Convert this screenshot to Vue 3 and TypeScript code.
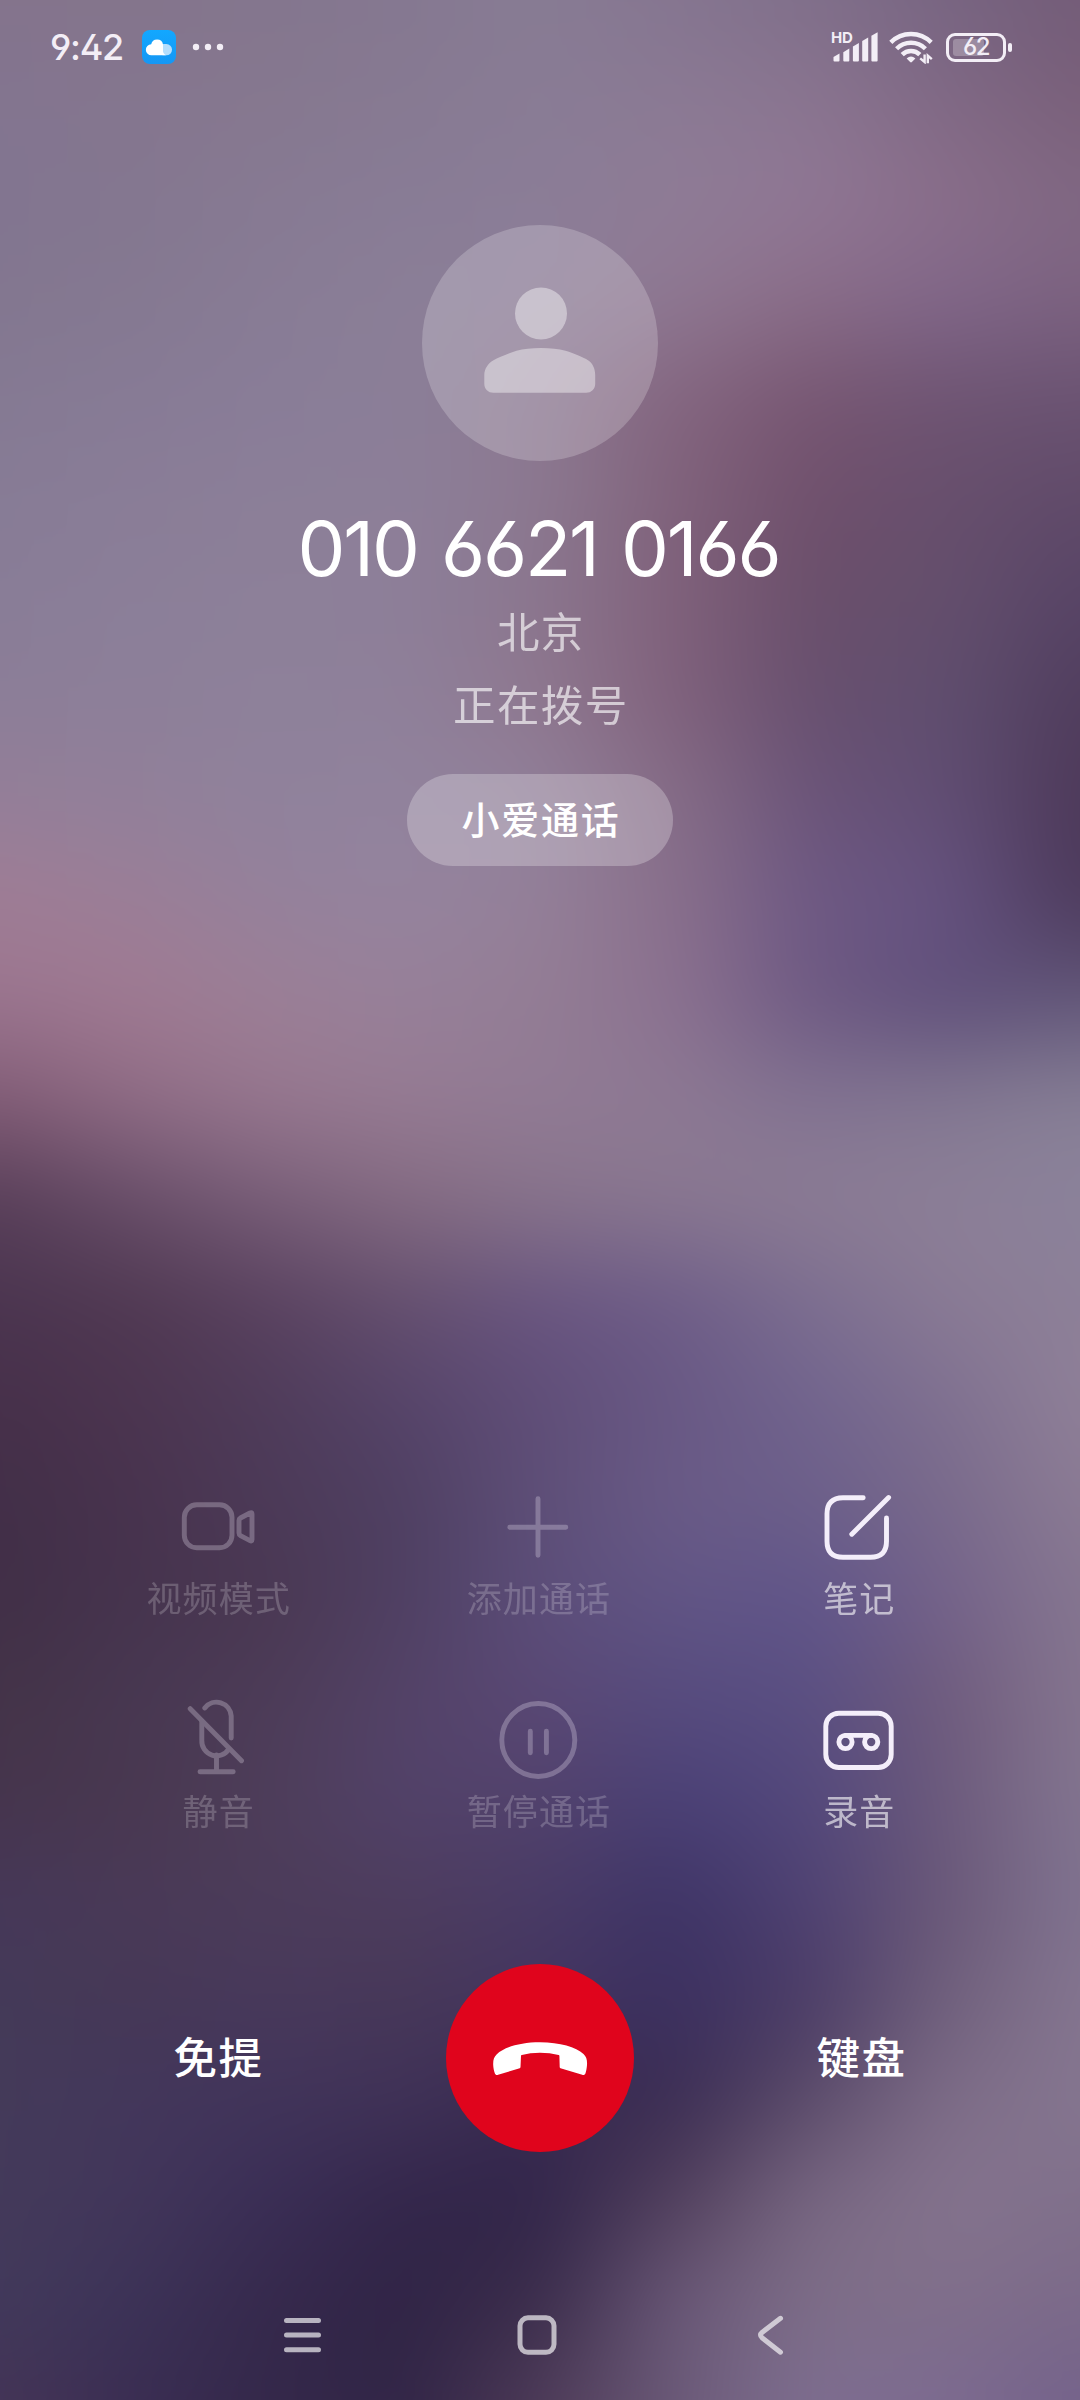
<script setup lang="ts">
interface Action {
  id: string
  label: string
  enabled: boolean
}

const actions: Action[] = [
  { id: 'video', label: '视频模式', enabled: false },
  { id: 'add', label: '添加通话', enabled: false },
  { id: 'note', label: '笔记', enabled: true },
  { id: 'mute', label: '静音', enabled: false },
  { id: 'hold', label: '暂停通话', enabled: false },
  { id: 'record', label: '录音', enabled: true },
]

// Wallpaper colour mesh: one row every 100px, one colour every 135px.
const mesh: string[] = [
  '84748c 84758c 84768e 857891 887c94 857590 806f8a 786582 735c78',
  '837590 85768f 86788f 877a92 897c95 8b7a94 8a7590 806985 7a607a',
  '827590 847790 877a93 887c96 8b7d97 8f7c96 907795 8a6e8a 806883',
  '837790 857991 887c95 8b7f97 8d7e98 8f7892 8a6d88 81678a 7c6280',
  '857a93 877b96 897d98 8b7f98 8c7891 84657f 775672 6e5472 6a5372',
  '877c96 8a7d97 8c7f98 8d7f99 8c7990 80627b 70506c 674f6d 604a69',
  '897d97 8b7f99 8d8099 8d7f99 8b768e 80617b 6a4f6b 644f6d 574466',
  '8c7e98 8d7f99 8e819a 8f809a 8f788f 80617c 68506f 5f4e6f 503d5d',
  '947f99 92809a 90829c 91839d 91809a 866d87 6b5479 614e74 4d3959',
  'a07d95 9b7e97 95819b 95849e 948099 896f8b 6e5984 665381 4c3a5c',
  '9b758f a07a92 9c7f96 978099 937d94 8b7190 6e5982 5f4f7a 62577a',
  '825c76 8f6c85 97778f 967b93 917b95 8d7993 827392 837892 888096',
  '573e58 684e69 785e78 846b82 88748b 8a7891 8c7c94 8c7f97 8b829b',
  '4b3550 503952 5a4260 65506f 695581 6e5d88 7c6e90 8a7b95 8d8098',
  '47304a 4c3550 4f3c5a 56446a 604e78 685884 71648e 7f7090 8f8098',
  '422f48 48334e 4c3a58 4f4062 5e4f78 6a5b87 6c5f8a 796a8b 8b7b94',
  '412f47 46344e 4a3852 4f4063 5c4e7a 615585 60558a 74628a 857690',
  '443448 483852 4d3c58 544368 5a4875 564b7e 5a4f82 6f5b7c 85758f',
  '46354d 493850 4e3e5a 52426a 52426c 4a4076 53487c 6c5a7c 837590',
  '463859 4a3a58 4c3c5a 4e3d5e 493b66 3e3466 4f4273 6a5878 807390',
  '443a58 463856 48395c 473858 443560 3b3060 4b3c66 70607c 857690',
  '443b5a 43375c 41345a 403258 382a50 3a2c52 5c4c6a 7e6d88 857690',
  '443a5a 42365a 3a2e56 33264a 31254a 52405c 796883 85748e 80708b',
  '423a5c 3c3358 36294c 302446 3a2c4a 6a5878 7e6e88 806f8a 7c6a8a',
  '443456 3a2d52 34284a 312546 4e3b58 6b5a78 7e6e90 7c6a90 74628a',
]

const bleed = 120
const bands = mesh.map((row, i) => ({
  top: i === 0 ? '0px' : `${bleed + (i - 1) * 100}px`,
  backgroundImage: `linear-gradient(90deg, ${row
    .split(' ')
    .map((c, j) => `#${c} ${bleed + j * 135}px`)
    .join(', ')})`,
  maskImage: i === 0 ? 'none' : 'linear-gradient(180deg, transparent 0, #000 100px)',
}))
</script>

<template>
  <main class="screen">
    <div class="wallpaper">
      <div class="mesh">
        <div v-for="(b, i) in bands" :key="i" class="band" :style="b"></div>
      </div>
    </div>

    <header class="status">
      <span class="time">9:42</span>
      <svg class="cloud" viewBox="0 0 34 34" width="34" height="34">
        <defs>
          <linearGradient id="sky" x1="0" y1="0" x2="0" y2="1">
            <stop offset="0" stop-color="#12a8ff" />
            <stop offset="1" stop-color="#1597f4" />
          </linearGradient>
        </defs>
        <rect width="34" height="34" rx="8" fill="url(#sky)" />
        <rect x="16" y="14" width="14" height="11.3" rx="5.6" fill="#b4defd" />
        <path d="M9.5 25.3a5.5 5.5 0 0 1-.3-11 6 6 0 0 1 11.8.2v5.2a5.6 5.6 0 0 0 3 5.6z" fill="#fff" />
      </svg>
      <svg class="dots" viewBox="0 0 32 8" width="32" height="8" fill="#f3eef6">
        <circle cx="4" cy="4" r="3.2" /><circle cx="16" cy="4" r="3.2" /><circle cx="28" cy="4" r="3.2" />
      </svg>
      <span class="spacer"></span>
      <div class="signal">
        <span class="hd">HD</span>
        <svg viewBox="0 0 48 34" width="48" height="34" fill="#f3eef6">
          <path d="M2.5 27l6-3.4v6.9a1 1 0 0 1-1 1h-4a1 1 0 0 1-1-1z" />
          <path d="M12.3 22.2l6-3.6v11.9a1 1 0 0 1-1 1h-4a1 1 0 0 1-1-1z" />
          <path d="M21.9 16.6l6-3.6v17.5a1 1 0 0 1-1 1h-4a1 1 0 0 1-1-1z" />
          <path d="M31.2 11l6-3.4v22.9a1 1 0 0 1-1 1h-4a1 1 0 0 1-1-1z" />
          <path d="M40.4 5.8l6.2-3.6v28.3a1 1 0 0 1-1 1h-4.2a1 1 0 0 1-1-1z" />
        </svg>
      </div>
      <svg class="wifi" viewBox="0 0 44 34" width="44" height="34">
        <g fill="none" stroke="#f3eef6" stroke-width="4.4">
          <path d="M1.8 12.4a28.5 28.5 0 0 1 40.4 0" />
          <path d="M7.6 18.7a20.4 20.4 0 0 1 28.8 0" />
          <path d="M13.2 24.6a12.4 12.4 0 0 1 17.6 0" />
        </g>
        <path d="M17.6 28.4q4.4-3.6 8.800 0L22.9 32q-.9.9-1.8 0z" fill="#f3eef6" />
        <path d="M35.6 24.4v7.6l-4.4-3.6M38.8 33.2v-7.6l4 3.6" fill="none" stroke="#f3eef6" stroke-width="2.4" />
      </svg>
      <div class="battery">
        <i class="charge"></i>
        <span class="level">62</span>
      </div>
      <i class="battery-tip"></i>
    </header>

    <section class="caller">
      <svg class="avatar" viewBox="0 0 236 236" width="236" height="236">
        <circle cx="118" cy="118" r="118" fill="#fff" fill-opacity=".21" />
        <g fill="#fff" fill-opacity=".41">
          <circle cx="119" cy="88.4" r="26" />
          <path d="M62.3 150c0-6 3.5-11.5 9.2-14.8 5-2.6 14-6.7 23-9.4 7-2 15-2.8 24.5-2.8s17.500.8 24.5 2.8c9 2.7 18 6.800 22.5 9.4 5 3.3 7.2 8.8 7.2 14.8v9c0 5-4 8.8-9 8.8H71.3c-5 0-9-3.8-9-8.8z" />
        </g>
      </svg>
      <h1 class="number">010 6621 0166</h1>
      <p class="line">北京</p>
      <p class="line">正在拨号</p>
      <button class="pill">小爱通话</button>
    </section>

    <section class="actions">
      <div v-for="a in actions" :key="a.id" class="action" :class="{ off: !a.enabled }">
        <svg class="glyph" viewBox="0 0 100 100" width="100" height="100">
          <template v-if="a.id === 'video'">
            <rect x="16.3" y="27.8" width="47.7" height="43" rx="12.5" />
            <path d="M71 43.5q0-1.7 1.5-2.5l9.5-5q2-.9 2 1v25.600q0 2-2 1l-9.5-5Q71 57.8 71 56z" />
          </template>
          <path v-else-if="a.id === 'add'" d="M50 21.8v56.5M21.8 50.3h56" />
          <template v-else-if="a.id === 'note'">
            <path d="M54.2 20.8H34q-16 0-16 16v27.5q0 16 16 16h27.5q16 0 16-16V41" />
            <path d="M79.6 20.6 42.8 57.2" />
          </template>
          <template v-else-if="a.id === 'mute'">
            <path d="M36.8 18a14.7 14.7 0 0 1 26.4 8v22" />
            <path d="M33.8 31v19.3a14.7 14.7 0 0 0 27 8.8" />
            <path d="M22.2 18.7 73.5 70.7M48.5 65v16.5M32 81.7h33.2" />
          </template>
          <template v-else-if="a.id === 'hold'">
            <circle cx="50.3" cy="50" r="36.5" />
            <path d="M42.3 41.3v21.4M58.4 41.3v21.4" />
          </template>
          <template v-else>
            <rect x="16.8" y="23.2" width="65.4" height="54.3" rx="13" />
            <circle cx="36.5" cy="52" r="6.6" />
            <circle cx="62.2" cy="52" r="6.6" />
            <path d="M36.5 45.4h25.7" />
          </template>
        </svg>
        <span class="caption">{{ a.label }}</span>
      </div>
    </section>

    <section class="controls">
      <button class="side">免提</button>
      <button class="hangup">
        <svg viewBox="0 0 188 188" width="188" height="188">
          <path fill="#fff" d="M94 78.3c20 0 36 5 43.5 11.7 3 3 3.8 6 3.5 11-.2 3-.8 6-1.5 8.2-.5 1.5-1.7 2.1-3.3 1.6L114.5 104.3q-.8-.3-.8-1.2l-.3-11q0-.8-.8-1-8.6-2.3-18.6-2.3t-18.2 2.3q-.8.2-.8 1l-.5 11q0 .9-.8 1.2l-21.6 6.5c-1.6.5-2.8-.1-3.3-1.6-.9-2.5-1.5-5.5-1.6-8.2-.2-5 .8-8 3.6-10.7C58 83.3 74 78.3 94 78.3z" />
        </svg>
      </button>
      <button class="side">键盘</button>
    </section>

    <nav class="nav">
      <svg viewBox="0 0 40 40" width="40" height="40"><path d="M4.5 5.5h32M4.5 20.1h32M4.5 34.8h32" /></svg>
      <svg viewBox="0 0 40 40" width="40" height="40"><rect x="3" y="2.8" width="34" height="34.5" rx="8" /></svg>
      <svg viewBox="0 0 40 40" width="40" height="40"><path d="M28.5 3.3 10 17.5q-3 2.500 0 5.200L28.5 37.2" /></svg>
    </nav>
  </main>
</template>

<style>
body {
  margin: 0;
}
</style>

<style scoped>
.screen {
  position: relative;
  display: flex;
  flex-direction: column;
  width: 1080px;
  height: 2400px;
  overflow: hidden;
  color: #fff;
  font-family: 'Noto Sans CJK SC', sans-serif;
}
.wallpaper {
  position: absolute;
  inset: 0;
  overflow: hidden;
}
.mesh {
  position: absolute;
  inset: -120px;
  filter: blur(38px);
}
.band {
  position: absolute;
  left: 0;
  right: 0;
  height: 240px;
}
.status,
.caller,
.actions,
.controls,
.nav {
  position: relative;
}
.status {
  display: flex;
  align-items: center;
  box-sizing: border-box;
  height: 94px;
  padding: 0 68px 0 50px;
}
.time {
  width: 92px;
  font: 500 36px/44px Inter, sans-serif;
  font-feature-settings: 'ss01';
  letter-spacing: -1.3px;
  color: #f3eef6;
}
.dots {
  margin-left: 16px;
}
.spacer {
  flex: 1;
}
.signal {
  position: relative;
  height: 34px;
}
.signal svg {
  display: block;
}
.hd {
  position: absolute;
  left: 0;
  top: -1px;
  font: 700 15px/18px Inter, sans-serif;
  letter-spacing: -0.2px;
  color: #f3eef6;
}
.wifi {
  margin-left: 10px;
}
.battery {
  display: flex;
  align-items: center;
  justify-content: center;
  position: relative;
  box-sizing: border-box;
  width: 60px;
  height: 29px;
  margin-left: 13px;
  border: 3px solid #f3eef6;
  border-radius: 9px;
}
.charge {
  position: absolute;
  left: 4px;
  top: 3px;
  width: 31px;
  height: 17px;
  border-radius: 3px;
  background: rgba(255, 255, 255, 0.25);
}
.level {
  position: relative;
  font: 500 24px/24px Inter, sans-serif;
  font-feature-settings: 'ss01';
  letter-spacing: -1.5px;
  color: #f3eef6;
}
.battery-tip {
  width: 4px;
  height: 9px;
  margin-left: 2px;
  border-radius: 2px;
  background: #f3eef6;
}
.caller {
  display: flex;
  flex-direction: column;
  align-items: center;
  height: 772px;
  padding-top: 131px;
  box-sizing: border-box;
}
.avatar {
  display: block;
  flex: none;
}
.number {
  margin: 41px 3px 0 0;
  font: 400 76px/92px Inter, sans-serif;
  font-feature-settings: 'ss01';
  letter-spacing: -2.2px;
  word-spacing: 4px;
  white-space: nowrap;
}
.line {
  margin: 0 -1.7px 0 0;
  font-size: 42.5px;
  line-height: 72.5px;
  letter-spacing: 1.4px;
  opacity: 0.64;
}
button {
  padding: 0;
  border: 0;
  background: none;
  color: inherit;
  font-family: inherit;
}
.pill {
  flex: none;
  width: 266px;
  height: 92px;
  margin-top: 35px;
  padding: 0 0 4px 2px;
  border-radius: 46px;
  background: rgba(255, 255, 255, 0.26);
  font-size: 38px;
  font-weight: 500;
  line-height: 88px;
  letter-spacing: 1.7px;
}
.actions {
  display: grid;
  grid-template-columns: repeat(3, 320.3px);
  grid-auto-rows: 213.5px;
  margin: 610.5px 0 0 58px;
}
.action {
  display: flex;
  flex-direction: column;
  align-items: center;
}
.glyph {
  fill: none;
  stroke: #f4eefa;
  stroke-width: 4.9;
  stroke-linecap: round;
  stroke-linejoin: round;
}
.off .glyph {
  opacity: 0.27;
}
.caption {
  margin: -1px -1px 0 0;
  font-size: 35px;
  line-height: 42px;
  letter-spacing: 1.1px;
  opacity: 0.6;
}
.off .caption {
  opacity: 0.2;
}
.controls {
  display: flex;
  align-items: center;
  justify-content: space-between;
  height: 188px;
  margin: 60px 58px 0;
}
.side {
  width: 321px;
  padding: 0 0 3px;
  font-size: 43.5px;
  font-weight: 500;
  line-height: 60px;
  letter-spacing: 1.5px;
}
.hangup {
  width: 188px;
  height: 188px;
  border-radius: 50%;
  background: #e0041c;
}
.hangup svg {
  display: block;
}
.nav {
  display: flex;
  gap: 195px;
  margin: 163.5px 0 0 282px;
}
.nav svg {
  fill: none;
  stroke: #fff;
  stroke-opacity: 0.65;
  stroke-width: 5;
  stroke-linecap: round;
  stroke-linejoin: round;
}
</style>
